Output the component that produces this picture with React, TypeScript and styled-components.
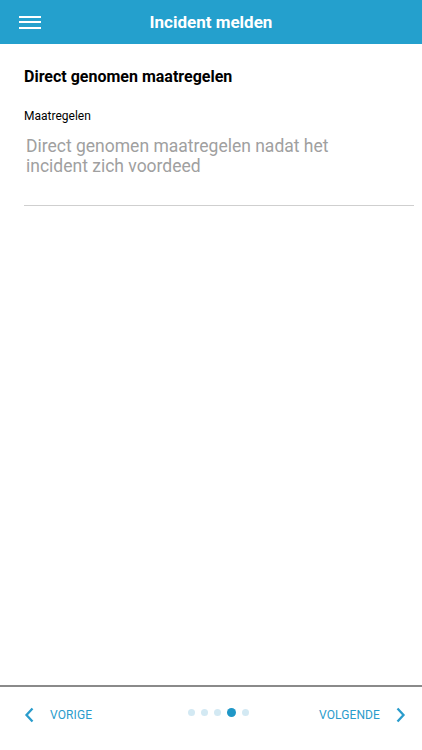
import React from "react";
import styled, { createGlobalStyle } from "styled-components";

const Global = createGlobalStyle`
  html, body { margin: 0; padding: 0; background: #fff; }
  body { font-family: Roboto, "Noto Sans", sans-serif; }
  #root { height: 750px; }
`;

const Page = styled.div`
  width: 422px;
  height: 750px;
  display: flex;
  flex-direction: column;
  background: #fff;
`;

const Header = styled.header`
  height: 44px;
  background: #24a0cd;
  display: flex;
  align-items: center;
  position: relative;
  flex-shrink: 0;
`;

const MenuButton = styled.button`
  width: 22px;
  height: 13px;
  margin-left: 19px;
  padding: 0;
  border: none;
  background: none;
  display: flex;
  flex-direction: column;
  justify-content: space-between;
`;

const MenuLine = styled.span`
  display: block;
  height: 2px;
  width: 22px;
  background: #fff;
`;

const Title = styled.h1`
  position: absolute;
  left: 0;
  right: 0;
  text-align: center;
  margin: 0;
  color: #fff;
  font-size: 17px;
  font-weight: 700;
  pointer-events: none;
`;

const Content = styled.main`
  flex: 1;
  padding: 22px 8px 0 24px;
  display: flex;
  flex-direction: column;
`;

const SectionTitle = styled.h2`
  margin: 0;
  font-size: 16px;
  font-weight: 700;
  color: #000;
  line-height: 22px;
`;

const Label = styled.label`
  margin-top: 20px;
  font-size: 12px;
  color: #000;
  line-height: 16px;
`;

const TextArea = styled.textarea`
  margin-top: 12px;
  height: 69px;
  border: none;
  border-bottom: 1px solid #cfcfcf;
  padding: 0 70px 0 2px;
  resize: none;
  outline: none;
  font-family: Roboto, "Noto Sans", sans-serif;
  font-size: 17.5px;
  line-height: 20px;
  color: #333;
  &::placeholder { color: #a0a0a0; }
`;

const Footer = styled.footer`
  height: 65px;
  border-top: 2px solid #8a8a8a;
  display: flex;
  align-items: flex-start;
  padding: 18px 16px 0 24px;
  box-sizing: border-box;
  flex-shrink: 0;
`;

const NavButton = styled.button`
  display: flex;
  align-items: center;
  gap: 15px;
  border: none;
  background: none;
  padding: 0;
  color: #2a9ccc;
  font-family: Roboto, "Noto Sans", sans-serif;
  font-size: 12px;
  letter-spacing: 0.1px;
  height: 20px;
`;

const NextButton = styled(NavButton)`
  margin-left: auto;
`;

const Dots = styled.div`
  display: flex;
  align-items: center;
  gap: 6px;
  height: 14px;
  margin-left: 96px;
`;

const Dot = styled.span<{ $active?: boolean }>`
  width: ${(p) => (p.$active ? 9 : 7)}px;
  height: ${(p) => (p.$active ? 9 : 7)}px;
  border-radius: 50%;
  background: ${(p) => (p.$active ? "#1f97c7" : "#d3e9f3")};
`;

const Chevron = ({ dir }: { dir: "left" | "right" }) => (
  <svg width="11" height="16" viewBox="0 0 11 16">
    <path
      d={dir === "left" ? "M8.5 1.5 L2.5 8 L8.5 14.5" : "M2.5 1.5 L8.5 8 L2.5 14.5"}
      fill="none"
      stroke="#2a9ccc"
      strokeWidth="2.3"
    />
  </svg>
);

export default function App() {
  return (
    <Page>
      <Global />
      <Header>
        <MenuButton aria-label="menu">
          <MenuLine />
          <MenuLine />
          <MenuLine />
        </MenuButton>
        <Title>Incident melden</Title>
      </Header>
      <Content>
        <SectionTitle>Direct genomen maatregelen</SectionTitle>
        <Label>Maatregelen</Label>
        <TextArea placeholder="Direct genomen maatregelen nadat het incident zich voordeed" />
      </Content>
      <Footer>
        <NavButton>
          <Chevron dir="left" />
          VORIGE
        </NavButton>
        <Dots>
          <Dot />
          <Dot />
          <Dot />
          <Dot $active />
          <Dot />
        </Dots>
        <NextButton>
          VOLGENDE
          <Chevron dir="right" />
        </NextButton>
      </Footer>
    </Page>
  );
}
